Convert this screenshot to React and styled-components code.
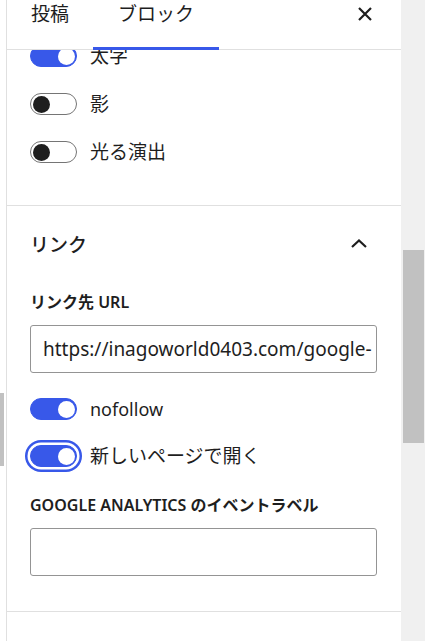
import React from 'react';
import styled, { createGlobalStyle, css } from 'styled-components';

const GlobalStyle = createGlobalStyle`
  html, body {
    margin: 0;
    padding: 0;
    background: #ffffff;
  }
  body {
    font-family: "Noto Sans", "Noto Sans CJK JP", sans-serif;
    color: #1e1e1e;
  }
`;

const Screen = styled.div`
  display: flex;
  width: 425px;
  height: 641px;
  overflow: hidden;
`;

const LeftGutter = styled.div`
  width: 6px;
  flex-shrink: 0;
  padding-top: 393px;
  box-sizing: border-box;
`;

const GutterThumb = styled.div`
  width: 4px;
  height: 73px;
  background: #c1c1c1;
`;

const Sidebar = styled.div`
  width: 395px;
  flex-shrink: 0;
  border-left: 1px solid #e0e0e0;
  box-sizing: border-box;
  background: #ffffff;
  display: flex;
  flex-direction: column;
  overflow: hidden;
`;

const Header = styled.div`
  position: relative;
  z-index: 1;
  display: flex;
  align-items: flex-start;
  height: 50px;
  background: #ffffff;
  box-shadow: inset 0 -1px 0 #e0e0e0;
  flex-shrink: 0;
`;

const Tab = styled.div`
  height: 50px;
  box-sizing: border-box;
  padding: 3px ${(p) => p.$pad}px 0;
  font-size: 19px;
  line-height: 22px;
  color: #1e1e1e;
  ${(p) =>
    p.$active &&
    css`
      box-shadow: inset 0 -3px 0 #3858e9;
    `}
`;

const CloseButton = styled.div`
  margin-left: auto;
  margin-right: 29px;
  margin-top: 7px;
  width: 14px;
  height: 14px;
  display: flex;
`;

const Body = styled.div`
  margin-top: -5px;
`;

const Section = styled.div`
  padding: 0 24px ${(p) => p.$bottom}px 23px;
  border-top: ${(p) => (p.$divided ? '1px solid #e0e0e0' : 'none')};
`;

const ToggleList = styled.div`
  display: flex;
  flex-direction: column;
  gap: ${(p) => p.$gap}px;
  margin-top: ${(p) => p.$top || 0}px;
`;

const ToggleRow = styled.div`
  display: flex;
  align-items: center;
  gap: 13px;
  height: 22px;
`;

const Track = styled.div`
  position: relative;
  width: 47px;
  height: 22px;
  box-sizing: border-box;
  border-radius: 11px;
  flex-shrink: 0;
  background: ${(p) => (p.$on ? '#3858e9' : '#ffffff')};
  border: 1px solid ${(p) => (p.$on ? '#3858e9' : '#757575')};
  ${(p) =>
    p.$focus &&
    css`
      box-shadow: 0 0 0 2.5px #ffffff, 0 0 0 5px #3858e9;
    `}
`;

const Knob = styled.span`
  position: absolute;
  top: 1.5px;
  left: ${(p) => (p.$on ? '26.5px' : '1.5px')};
  width: 17px;
  height: 17px;
  border-radius: 50%;
  background: ${(p) => (p.$on ? '#ffffff' : '#1e1e1e')};
`;

const ToggleLabel = styled.span`
  font-size: ${(p) => (p.$latin ? '18px' : '19px')};
  line-height: 22px;
  color: #1e1e1e;
  white-space: nowrap;
`;

const PanelTitle = styled.div`
  display: flex;
  align-items: center;
  justify-content: space-between;
  height: 76px;
  font-size: 19px;
  font-weight: 500;
`;

const Chevron = styled.svg`
  margin-right: 10px;
  margin-top: -1px;
`;

const FieldLabel = styled.div`
  margin-top: ${(p) => p.$top}px;
  font-size: 16px;
  line-height: 20px;
  font-weight: 600;
  text-transform: uppercase;
  white-space: nowrap;
`;

const TextInput = styled.div`
  margin-top: 13px;
  height: 48px;
  box-sizing: border-box;
  border: 1px solid #949494;
  border-radius: 3px;
  padding: 0 12px;
  display: flex;
  align-items: center;
  font-size: 19px;
  color: #1e1e1e;
  white-space: nowrap;
  overflow: hidden;
`;

const ScrollTrack = styled.div`
  flex: 1;
  background: #f0f0f0;
  padding: 250px 1px 0 2px;
`;

const ScrollThumb = styled.div`
  height: 193px;
  background: #c1c1c1;
`;

function Toggle({ on, focus, latin, children }) {
  return (
    <ToggleRow>
      <Track $on={on} $focus={focus}>
        <Knob $on={on} />
      </Track>
      <ToggleLabel $latin={latin}>{children}</ToggleLabel>
    </ToggleRow>
  );
}

export default function App() {
  return (
    <>
      <GlobalStyle />
      <Screen>
        <LeftGutter>
          <GutterThumb />
        </LeftGutter>
        <Sidebar>
          <Header>
            <Tab $pad={24}>投稿</Tab>
            <Tab $pad={25} $active>ブロック</Tab>
            <CloseButton>
              <svg width="14" height="14" viewBox="0 0 14 14">
                <path d="M1 1 L13 13 M13 1 L1 13" stroke="#1e1e1e" strokeWidth="2.2" fill="none" />
              </svg>
            </CloseButton>
          </Header>
          <Body>
            <Section $bottom={42}>
              <ToggleList $gap={26}>
                <Toggle on>太字</Toggle>
                <Toggle>影</Toggle>
                <Toggle>光る演出</Toggle>
              </ToggleList>
            </Section>
            <Section $divided $bottom={35}>
              <PanelTitle>
                リンク
                <Chevron width="16" height="9" viewBox="0 0 16 9">
                  <polyline points="1,8 8,1.5 15,8" stroke="#1e1e1e" strokeWidth="2.2" fill="none" />
                </Chevron>
              </PanelTitle>
              <FieldLabel $top={10}>リンク先 URL</FieldLabel>
              <TextInput>https://inagoworld0403.com/google-</TextInput>
              <ToggleList $gap={25} $top={25}>
                <Toggle on latin>nofollow</Toggle>
                <Toggle on focus>新しいページで開く</Toggle>
              </ToggleList>
              <FieldLabel $top={28}>Google Analytics のイベントラベル</FieldLabel>
              <TextInput />
            </Section>
            <Section $divided $bottom={0} />
          </Body>
        </Sidebar>
        <ScrollTrack>
          <ScrollThumb />
        </ScrollTrack>
      </Screen>
    </>
  );
}
